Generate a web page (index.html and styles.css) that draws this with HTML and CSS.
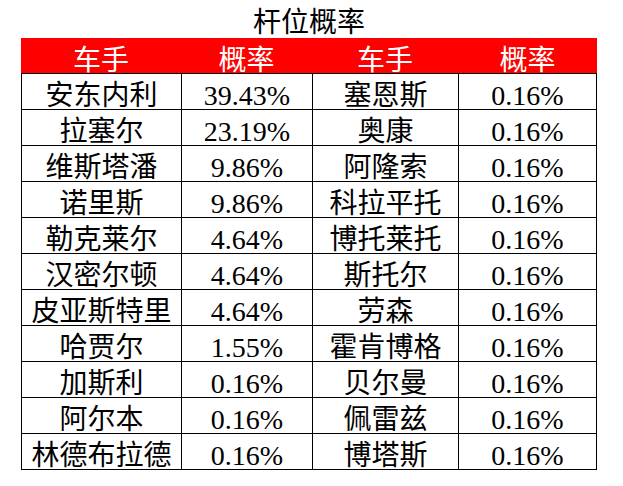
FILE: index.html
```html
<!DOCTYPE html>
<html lang="zh">
<head>
<meta charset="utf-8">
<title>杆位概率</title>
<link rel="stylesheet" href="styles.css">
</head>
<body>
<div class="page">
  <div class="title">杆位概率</div>
  <div class="head">
    <div>车手</div><div>概率</div><div>车手</div><div>概率</div>
  </div>
  <div class="body">
    <div>安东内利</div><div>39.43%</div><div>塞恩斯</div><div>0.16%</div>
    <div>拉塞尔</div><div>23.19%</div><div>奥康</div><div>0.16%</div>
    <div>维斯塔潘</div><div>9.86%</div><div>阿隆索</div><div>0.16%</div>
    <div>诺里斯</div><div>9.86%</div><div>科拉平托</div><div>0.16%</div>
    <div>勒克莱尔</div><div>4.64%</div><div>博托莱托</div><div>0.16%</div>
    <div>汉密尔顿</div><div>4.64%</div><div>斯托尔</div><div>0.16%</div>
    <div>皮亚斯特里</div><div>4.64%</div><div>劳森</div><div>0.16%</div>
    <div>哈贾尔</div><div>1.55%</div><div>霍肯博格</div><div>0.16%</div>
    <div>加斯利</div><div>0.16%</div><div>贝尔曼</div><div>0.16%</div>
    <div>阿尔本</div><div>0.16%</div><div>佩雷兹</div><div>0.16%</div>
    <div>林德布拉德</div><div>0.16%</div><div>博塔斯</div><div>0.16%</div>
  </div>
</div>
</body>
</html>
```

FILE: styles.css
```css
html, body {
  margin: 0;
  padding: 0;
  background: #ffffff;
}
body {
  font-family: "Liberation Serif", "Noto Sans CJK SC", serif;
  color: #000000;
}
.page {
  width: 576px;
  margin-left: 21px;
}
.title {
  height: 38px;
  box-sizing: border-box;
  padding-top: 8px;
  line-height: 30px;
  font-size: 28px;
  text-align: center;
}
.head {
  display: grid;
  grid-template-columns: 160px 131px 146px 139px;
  height: 35px;
  background: #ff0000;
  color: #ffffff;
}
.head > div {
  font-size: 28px;
  padding-top: 7px;
  line-height: 31px;
  text-align: center;
}
.body {
  display: grid;
  grid-template-columns: 159px 130px 145px 137px;
  grid-auto-rows: 35px;
  gap: 1px;
  background: #000000;
  border: 1px solid #000000;
}
.body > div {
  background: #ffffff;
  font-size: 28px;
  padding-top: 6px;
  line-height: 32px;
  text-align: center;
}
```
